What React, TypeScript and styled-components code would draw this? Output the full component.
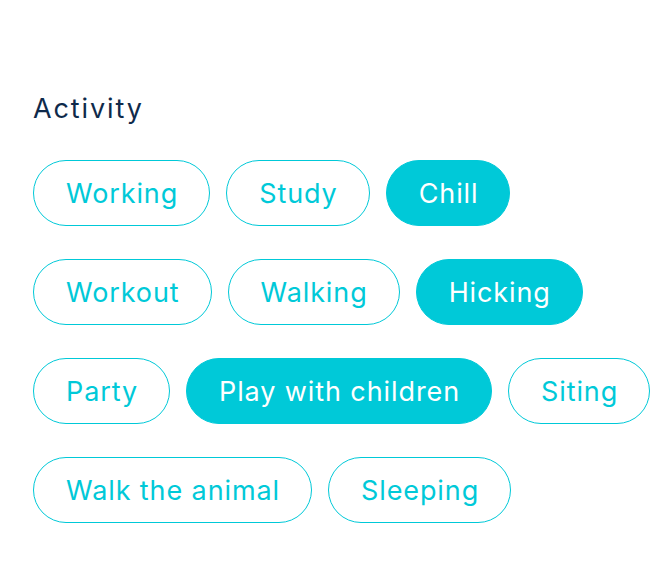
import React from "react";
import styled, { createGlobalStyle } from "styled-components";

const GlobalStyle = createGlobalStyle`
  html, body { margin: 0; padding: 0; background: #ffffff; }
  body { font-family: Inter, "Noto Sans", sans-serif; }
`;

const Page = styled.div`
  padding: 93px 24px 40px 33px;
  display: flex;
  flex-direction: column;
`;

const Title = styled.h2`
  margin: 0 0 35px;
  font-size: 27px;
  line-height: 32px;
  font-weight: 400;
  color: #0f2a4b;
  letter-spacing: 1.9px;
`;

const Chips = styled.div`
  display: flex;
  flex-direction: column;
  gap: 33px;
`;

const Row = styled.div`
  display: flex;
  gap: 16px;
`;

const Chip = styled.button<{ $active?: boolean }>`
  box-sizing: border-box;
  height: 66px;
  padding: 0 31px 0 32px;
  border-radius: 33px;
  border: 1.6px solid #00c9d8;
  background: ${(p) => (p.$active ? "#00c9d8" : "#ffffff")};
  color: ${(p) => (p.$active ? "#ffffff" : "#00c9d8")};
  font-family: Inter, "Noto Sans", sans-serif;
  font-size: 27px;
  font-weight: 400;
  line-height: 1;
  letter-spacing: 0.9px;
  display: inline-flex;
  align-items: center;
  justify-content: center;
  white-space: nowrap;
  cursor: pointer;
`;

const rows: { label: string; active?: boolean }[][] = [
  [{ label: "Working" }, { label: "Study" }, { label: "Chill", active: true }],
  [{ label: "Workout" }, { label: "Walking" }, { label: "Hicking", active: true }],
  [{ label: "Party" }, { label: "Play with children", active: true }, { label: "Siting" }],
  [{ label: "Walk the animal" }, { label: "Sleeping" }],
];

export default function App() {
  return (
    <>
      <GlobalStyle />
      <Page>
        <Title>Activity</Title>
        <Chips>
          {rows.map((r, i) => (
            <Row key={i}>
              {r.map((c) => (
                <Chip key={c.label} $active={c.active}>
                  {c.label}
                </Chip>
              ))}
            </Row>
          ))}
        </Chips>
      </Page>
    </>
  );
}
